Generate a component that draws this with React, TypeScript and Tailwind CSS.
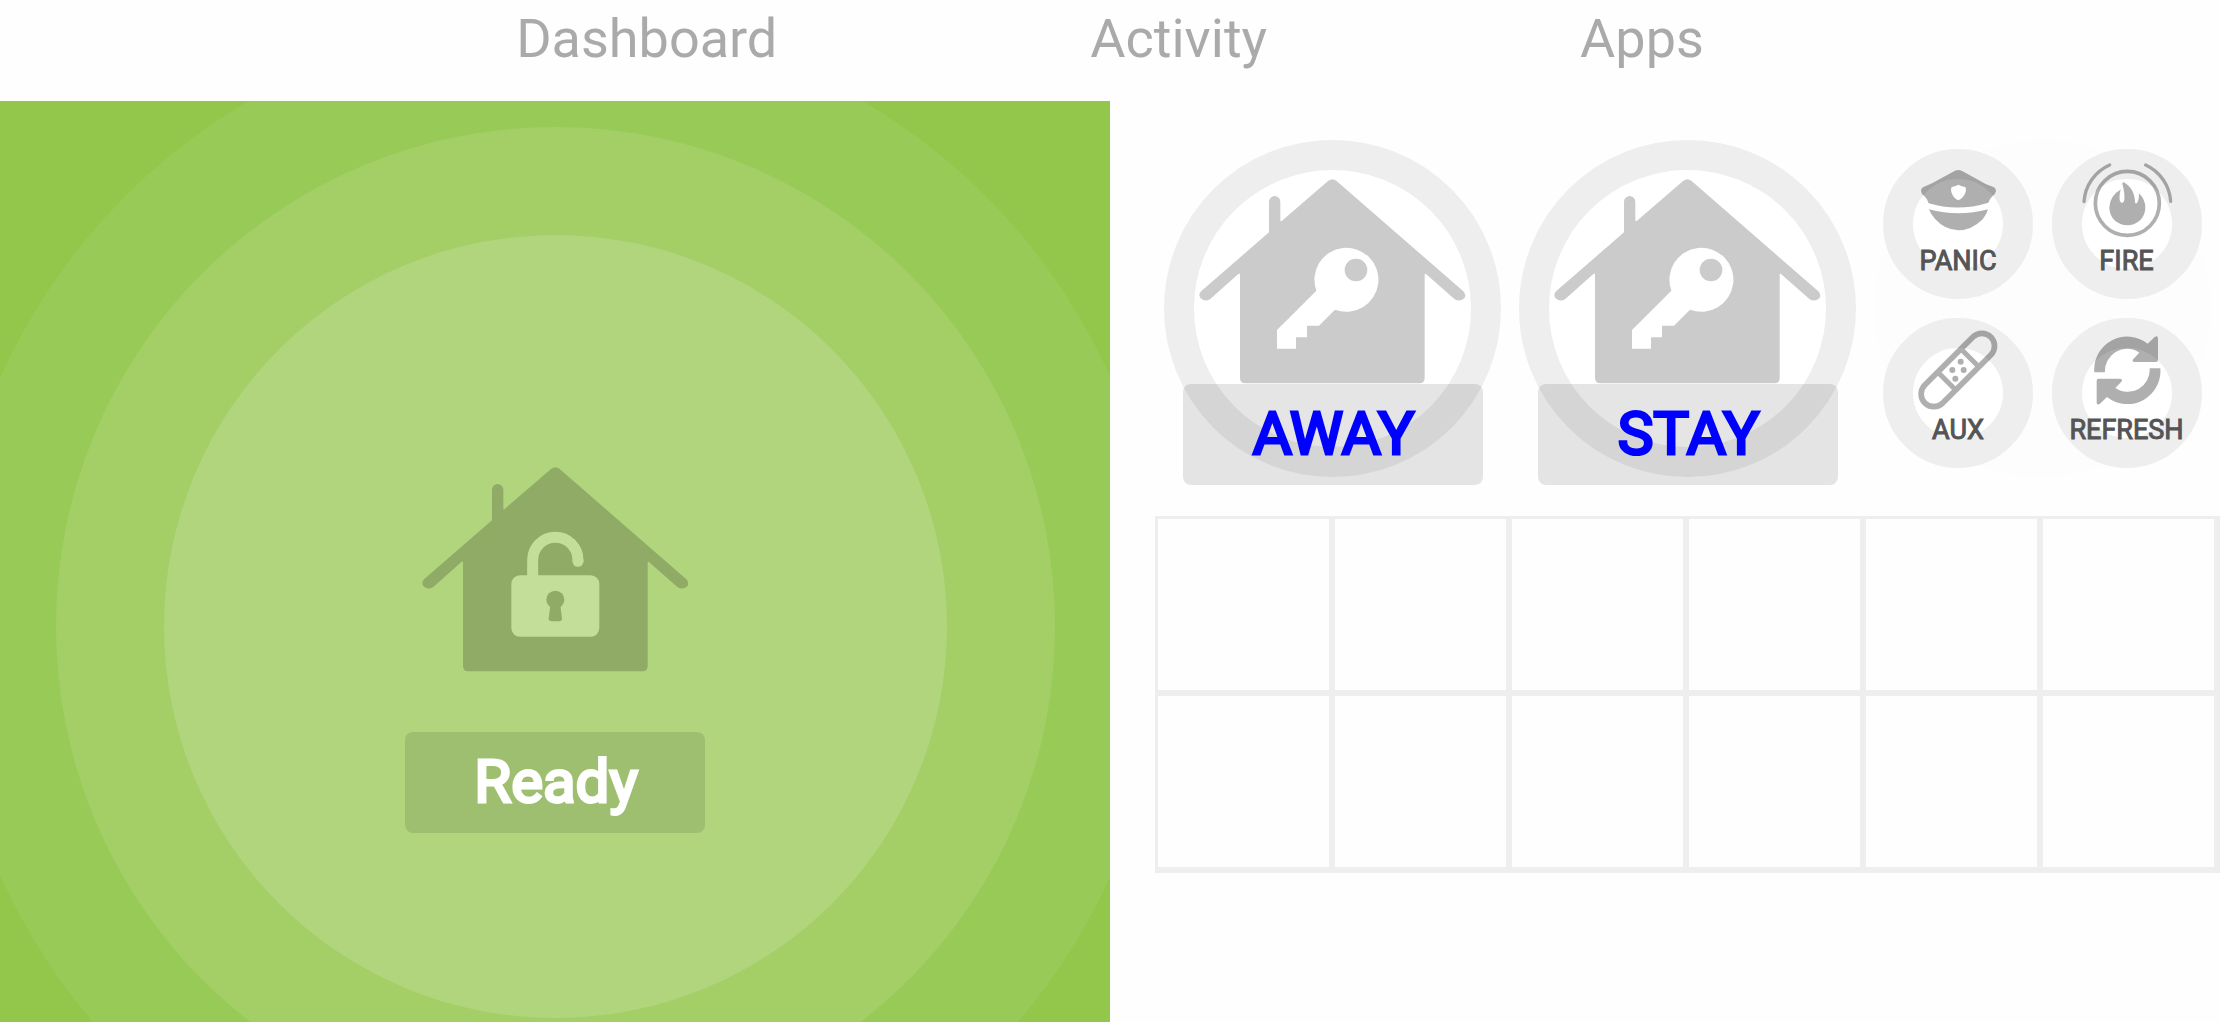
import type { ReactNode } from "react";

const HOUSE =
  "M388 5Q400 -4 412 5L793 337Q803 348 796 358Q782 370 767 361L681 285Q677 282 677 287V597Q677 613 661 613H139Q123 613 123 597V287Q123 281 118 285L33 361Q18 370 5 358Q-4 346 7 336L210 160V68a17 17 0 0 1 34 0V124Q244 129 249 125Z";

function House({ className, children }: { className: string; children: ReactNode }) {
  return (
    <svg viewBox="0 0 801 615" className={`h-[205px] w-[267px] shrink-0 ${className}`} aria-hidden="true">
      <path d={HOUSE} fill="currentColor" />
      {children}
    </svg>
  );
}

function KeyHouse() {
  return (
    <House className="text-[#cbcbcb]">
      <path
        fill="#fff"
        fillRule="evenodd"
        d="M352 335L234 453V509H291V475H324V440H360L408 392A96 96 0 1 0 352 335ZM471 239a34 34 0 1 1 0 68a34 34 0 1 1 0 -68Z"
      />
    </House>
  );
}

function UnlockedHouse() {
  return (
    <House className="text-[#8fab65]">
      <path d="M332 330V279A68 68 0 0 1 468 279V283" fill="none" stroke="#c3de98" strokeWidth="33" />
      <circle cx="468" cy="283" r="16.5" fill="#c3de98" />
      <rect x="268" y="325" width="264" height="184" rx="26" fill="#c3de98" />
      <circle cx="400" cy="398" r="27" fill="currentColor" />
      <path d="M385 416L380 454Q380 463 389 463H411Q420 463 420 454L415 416Z" fill="currentColor" />
    </House>
  );
}

function Plate({ className, children }: { className: string; children: ReactNode }) {
  return (
    <span
      className={`relative flex h-[101px] w-[300px] items-center justify-center rounded-lg bg-black/10 pb-0.5 pl-0.5 text-[60px] leading-none [-webkit-text-stroke:3px_currentColor] ${className}`}
    >
      {children}
    </span>
  );
}

function ArmButton({ label }: { label: string }) {
  return (
    <button type="button" className="relative flex w-[337px] flex-col items-center pt-[39px]">
      <span className="absolute inset-x-0 top-0 aspect-square rounded-full border-[30px] border-[#eee] bg-white" />
      <span className="relative">
        <KeyHouse />
      </span>
      <Plate className="text-[#0000ff]">{label}</Plate>
    </button>
  );
}

function ActionButton({ label, viewBox, children }: { label: string; viewBox: string; children: ReactNode }) {
  return (
    <button
      type="button"
      className="relative flex size-[150px] items-end justify-center rounded-full border-[30px] border-[#eee] bg-white"
    >
      <svg viewBox={viewBox} className="absolute -inset-[30px] size-[150px]" aria-hidden="true">
        <g opacity="0.31">{children}</g>
      </svg>
      <span className="relative -mb-2 text-[27px] leading-8 text-[#555] [-webkit-text-stroke:1px_currentColor]">
        {label}
      </span>
    </button>
  );
}

const REFRESH_ARROW =
  "M162 213A99 99 0 0 1 322 127L343 107Q352 101 353 110V176Q353 182 347 182H283Q273 181 279 173L297 154A66 66 0 0 0 194 213Z";

export default function App() {
  return (
    <div className="flex min-h-screen flex-col bg-[#fefefe] font-['Roboto',sans-serif]">
      <nav className="flex h-[101px] items-start justify-between px-[23.25%] pt-[7px] text-[54px] leading-[64px] text-[#aaa]">
        <a href="#dashboard">Dashboard</a>
        <a href="#activity">Activity</a>
        <a href="#apps">Apps</a>
      </nav>

      <main className="grid flex-1 grid-cols-2">
        <section className="flex items-start justify-center overflow-hidden bg-[#93c74b] pt-[134px]">
          <div className="flex size-[783px] shrink-0 flex-col items-center gap-[60px] rounded-full bg-[#b0d57d] pt-[232px] shadow-[0_0_0_108px_#a3cf66,0_0_0_217px_#98ca57]">
            <UnlockedHouse />
            <Plate className="text-white">Ready</Plate>
          </div>
        </section>

        <section className="pt-[39px] pl-[45px]">
          <div className="grid grid-cols-3 items-start justify-items-center">
            <ArmButton label="AWAY" />
            <ArmButton label="STAY" />
            <div className="grid size-[337px] grid-cols-2 gap-[18px] rounded-full bg-[#fdfdfd] p-[9px]">
              <ActionButton label="PANIC" viewBox="39 56 450 450">
                <path
                  fillRule="evenodd"
                  d="M265 119Q270 119 275 121L320 146Q345 162 372 171Q378 174 378 182Q377 190 368 197Q357 207 355 217Q265 245 176 219Q173 206 163 197Q153 190 153 182Q153 174 159 171Q186 160 211 145L255 121Q260 119 265 119ZM265 163Q255 168 245 170Q242 175 244 185Q249 203 265 210Q281 203 287 185Q289 175 286 170Q275 168 265 163Z"
                />
                <path d="M177 237Q265 261 354 237Q350 253 338 267Q305 300 265 300Q225 299 196 267Q182 252 177 237Z" />
              </ActionButton>
              <ActionButton label="FIRE" viewBox="35 56 450 450">
                <g fill="none" stroke="#000" strokeLinecap="round">
                  <circle cx="261" cy="219" r="96" strokeWidth="11" />
                  <path d="M131 214A129 129 0 0 1 208 104M316 104A129 129 0 0 1 391 213" strokeWidth="10" />
                </g>
                <path d="M248 155C268 164 283 184 284 214Q285 222 289 219Q296 212 296 189Q315 208 315 232A54 53 0 0 1 207 232Q208 197 242 177Q236 190 238 210Q240 218 245 218Q251 217 252 208Q254 190 246 160Z" />
              </ActionButton>
              <ActionButton label="AUX" viewBox="39 50 450 450">
                <g fill="none" stroke="#000" strokeWidth="17">
                  <rect x="123.5" y="168" width="280" height="76" rx="38" transform="rotate(-45 263.5 206)" />
                  <path d="M273 143L327 197M203 212L257 266" strokeWidth="15" />
                </g>
                <circle cx="272" cy="181" r="9" />
                <circle cx="247" cy="206" r="9" />
                <circle cx="281" cy="206" r="9" />
                <circle cx="256" cy="232" r="9" />
              </ActionButton>
              <ActionButton label="REFRESH" viewBox="35 50 450 450">
                <path d={REFRESH_ARROW} />
                <path d={REFRESH_ARROW} transform="rotate(180 261 207)" />
              </ActionButton>
            </div>
          </div>

          <div className="mt-[31px] grid grid-cols-6 gap-1.5 bg-[#eee] pt-[3px] pr-1.5 pb-1.5 pl-[3px]">
            {Array.from({ length: 12 }, (_, i) => (
              <div key={i} className="aspect-square bg-[#fefefe]" />
            ))}
          </div>
        </section>
      </main>
    </div>
  );
}
